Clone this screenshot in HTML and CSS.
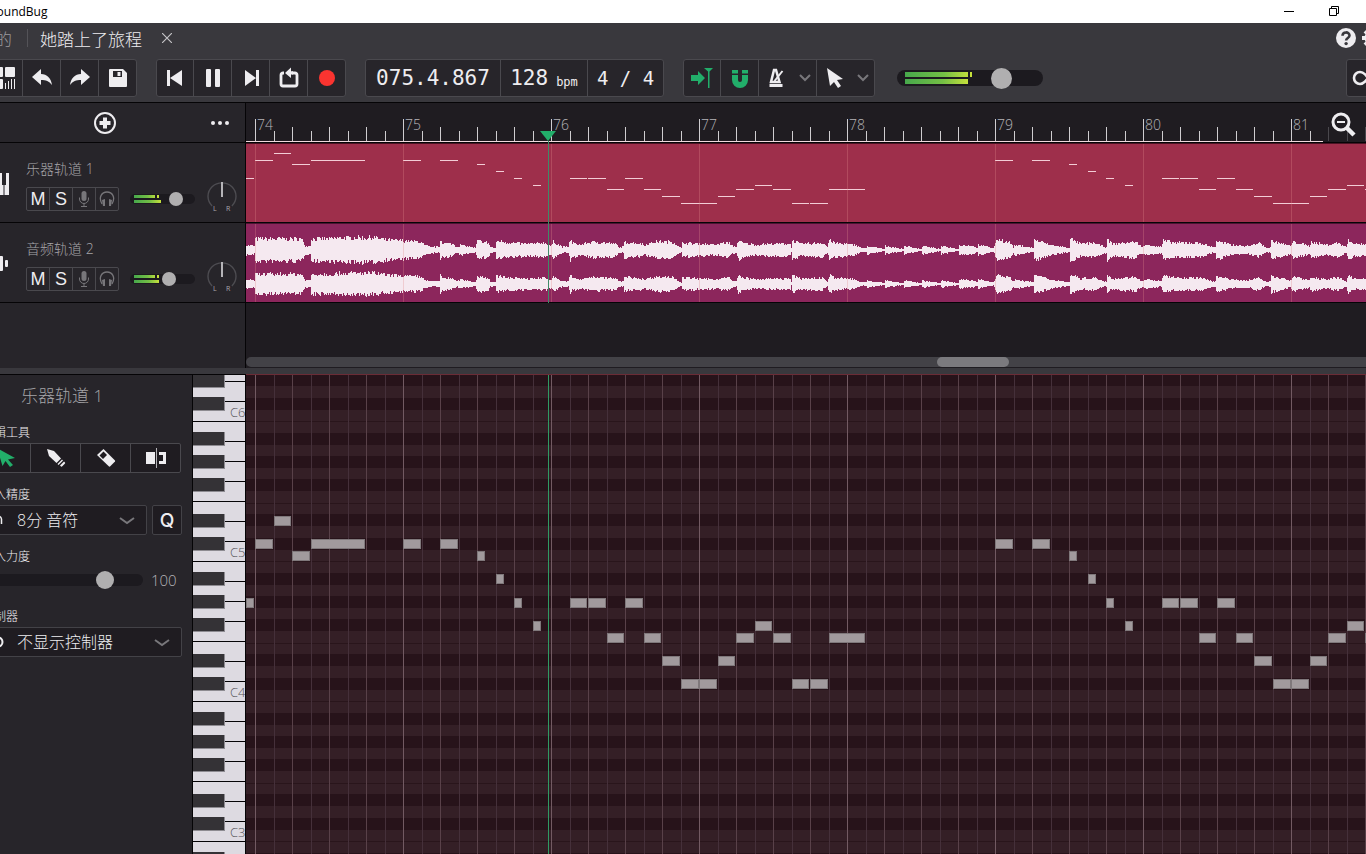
FILE: index.html
```html
<!DOCTYPE html>
<html lang="zh-CN">
<head>
<meta charset="utf-8">
<title>SoundBug</title>
<link rel="stylesheet" href="styles.css">
</head>
<body>
<div class="app">
  <header class="titlebar">
    <span class="app-name">SoundBug</span>
    <div class="window-buttons">
      <button aria-label="最小化"><svg width="10" height="10"><path d="M0 5.5h10" stroke="#000"/></svg></button>
      <button aria-label="还原"><svg width="10" height="10" fill="none" stroke="#000"><path d="M.5 2.5h7v7h-7zM2.500 2.500v-2h7v7h-2"/></svg></button>
      <button aria-label="关闭"><svg width="10" height="10"><path d="M0 0l10 10M10 0L0 10" stroke="#000"/></svg></button>
    </div>
  </header>

  <nav class="tabs">
    <a class="tab-home" href="#">我的</a>
    <span class="tab-divider"></span>
    <a class="tab-current" href="#">她踏上了旅程</a>
    <button class="tab-close" aria-label="关闭标签"><svg width="10" height="10"><path d="M0 0l10 10M10 0L0 10" stroke="#c4c3c6" stroke-width="1.200"/></svg></button>
    <div class="tab-actions">
      <button aria-label="帮助"><svg width="20" height="20"><circle cx="10" cy="10" r="10" fill="#eeedf0"/><path d="M6.500 7.800C6.500 3.300 13.500 3.400 13.500 7.500c0 2.500-3.400 2.500-3.400 5" fill="none" stroke="#39383d" stroke-width="2.600"/><circle cx="10.100" cy="15.600" r="1.700" fill="#39383d"/></svg></button>
      <button aria-label="设置"><svg width="20" height="20" fill="none" stroke="#eeedf0"><circle cx="10" cy="10" r="5.500" stroke-width="4"/><path d="M10 0v4M10 16v4M0 10h4M16 10h4M3 3l3 3M14 14l3 3M17 3l-3 3M6 14l-3 3" stroke-width="4"/></svg></button>
    </div>
  </nav>

  <div class="toolbar">
    <div class="group views">
      <button aria-label="视图"><svg width="26" height="26" fill="#eeedf0"><rect x="3" y="2" width="9" height="10" rx="1"/><rect x="14" y="2" width="10" height="10" rx="1"/><rect x="3" y="14" width="9" height="10" rx="1"/><path d="M14 18h1v6h-1zM17 16h1v8h-1zM20 14h1v10h-1zM23 14h1v10h-1z"/></svg></button>
      <button aria-label="撤销"><svg width="22" height="22"><path d="M1 10L10 2v5c6 0 10 4 11 11-3-4-6-5-11-5v5z" fill="#eeedf0"/></svg></button>
      <button aria-label="重做"><svg width="22" height="22"><path d="M21 10L12 2v5C6 7 2 11 1 18c3-4 6-5 11-5v5z" fill="#eeedf0"/></svg></button>
      <button aria-label="保存"><svg width="20" height="20"><path d="M2 1h13l4 4v13a1 1 0 0 1-1 1H2a1 1 0 0 1-1-1V2a1 1 0 0 1 1-1z" fill="#eeedf0"/><path d="M5 3h9v6H5z" fill="#27252a"/><path d="M9.500 4h3v4h-3z" fill="#eeedf0"/></svg></button>
    </div>
    <div class="group">
      <button aria-label="到开头"><svg width="20" height="20" fill="#eeedf0"><path d="M2 2h3v16H2zM17 2v16L5 10z"/></svg></button>
      <button aria-label="暂停"><svg width="20" height="20" fill="#eeedf0"><rect x="3" y="1" width="5" height="18" rx="1"/><rect x="12" y="1" width="5" height="18" rx="1"/></svg></button>
      <button aria-label="到结尾"><svg width="20" height="20" fill="#eeedf0"><path d="M15 2h3v16h-3zM4 2v16l11-8z"/></svg></button>
      <button aria-label="循环"><svg width="20" height="22"><path d="M5 6H4a2 2 0 0 0-2 2v9a2 2 0 0 0 2 2h12a2 2 0 0 0 2-2V8a2 2 0 0 0-2-2h-3" fill="none" stroke="#eeedf0" stroke-width="2.800"/><path d="M6 6l6-5.500v3.800h2v3.200h-2V11z" fill="#eeedf0"/></svg></button>
      <button aria-label="录音"><svg width="18" height="18"><circle cx="9" cy="9" r="8" fill="#fa3430"/></svg></button>
    </div>
    <div class="group readout">
      <output class="position">075.4.867</output>
      <span class="tempo">128 <small>bpm</small></span>
      <span class="meter">4 / 4</span>
    </div>
    <div class="group">
      <button aria-label="跟随播放"><svg width="24" height="24" fill="#22ae6a"><path d="M1 9h7V5l7 7-7 7v-4H1zM14 2h9l-3.500 3.500V22h-1.500V5.500z"/></svg></button>
      <button aria-label="吸附"><svg width="18" height="20"><path d="M4 7v5a5 5 0 0 0 10 0V7" fill="none" stroke="#22ae6a" stroke-width="6"/><path d="M1 2h6v3.500H1zM11 2h6v3.500h-6z" fill="#22ae6a"/></svg></button>
      <button class="wide" aria-label="节拍器"><svg width="18" height="20" fill="none" stroke="#eeedf0"><path d="M6 2h2l3.500 12H3z" stroke-width="2.500"/><path d="M1.500 17.500h13" stroke-width="3"/><path d="M6.500 13L14.500 3" stroke-width="2"/></svg><svg class="chev" width="12" height="8"><path d="M1 1l5 5 5-5"/></svg></button>
      <button class="wide" aria-label="指针"><svg width="18" height="20"><path d="M1 0l16 11-6 1 4 6-3 2-4-6-4 4z" fill="#eeedf0"/></svg><svg class="chev" width="12" height="8"><path d="M1 1l5 5 5-5"/></svg></button>
    </div>
    <div class="level master">
      <span class="bars"><i></i><i></i></span>
      <input type="range" min="0" max="100" value="75" aria-label="主音量">
    </div>
    <div class="group link">
      <button aria-label="循环链接"><svg width="34" height="20"><path d="M17 10c-3-4.500-5-6-8-6a6 6 0 0 0 0 12c3 0 5-1.500 8-6s5-6 8-6a6 6 0 0 1 0 12c-3 0-5-1.500-8-6" fill="none" stroke="#eeedf0" stroke-width="2.600"/></svg></button>
    </div>
  </div>

  <main class="arranger">
    <aside class="tracks">
      <div class="tracks-head">
        <button class="add" aria-label="添加轨道"><svg width="24" height="24"><circle cx="12" cy="12" r="10" fill="none" stroke="#eeedf0" stroke-width="2"/><path d="M12 6.500v11M6.500 12h11" stroke="#eeedf0" stroke-width="4"/></svg></button>
        <button class="more" aria-label="更多"><svg width="20" height="6" fill="#eeedf0"><circle cx="3" cy="3" r="2"/><circle cx="10" cy="3" r="2"/><circle cx="17" cy="3" r="2"/></svg></button>
      </div>
      <section class="track">
        <svg class="track-icon" width="32" height="24"><rect y="1" width="32" height="22" fill="#eeedf0"/><path d="M5 1h4v12H5zM15 1h4v12h-4zM25 1h4v12h-4zM6.500 13h1v10h-1zM16.500 13h1v10h-1zM26.500 13h1v10h-1z" fill="#27252a"/></svg>
        <div class="track-main">
          <h2>乐器轨道 1</h2>
          <div class="track-row">
            <div class="mini">
              <button>M</button><button>S</button>
              <button aria-label="录音输入"><svg width="12" height="18"><use href="#mic"/></svg></button>
              <button aria-label="监听"><svg width="16" height="18"><use href="#phones"/></svg></button>
            </div>
            <div class="level small one"><span class="bars"><i></i><i></i></span><input type="range" min="0" max="100" value="77" aria-label="轨道 1 音量"></div>
          </div>
        </div>
        <svg class="pan" width="30" height="34"><use href="#pan"/></svg>
      </section>
      <section class="track">
        <svg class="track-icon" width="32" height="24" fill="#eeedf0"><rect x="6" y="8" width="3" height="7" rx="1"/><rect x="12" y="1" width="5" height="21" rx="1"/><rect x="21" y="4" width="5" height="15" rx="1"/><rect x="28" y="8" width="3" height="7" rx="1"/></svg>
        <div class="track-main">
          <h2>音频轨道 2</h2>
          <div class="track-row">
            <div class="mini">
              <button>M</button><button>S</button>
              <button aria-label="录音输入"><svg width="12" height="18"><use href="#mic"/></svg></button>
              <button aria-label="监听"><svg width="16" height="18"><use href="#phones"/></svg></button>
            </div>
            <div class="level small two"><span class="bars"><i></i><i></i></span><input type="range" min="0" max="100" value="62" aria-label="轨道 2 音量"></div>
          </div>
        </div>
        <svg class="pan" width="30" height="34"><use href="#pan"/></svg>
      </section>
    </aside>
    <section class="timeline">
      <svg class="ruler" id="ruler"></svg>
      <svg class="lane midi" id="midi"></svg>
      <svg class="lane audio" id="audio"></svg>
      <div class="scroll"><span class="thumb"></span></div>
      <button class="zoom-out" aria-label="缩小"><svg width="26" height="26"><circle cx="11" cy="11" r="8" fill="#1f1c21" stroke="#eeedf0" stroke-width="3"/><path d="M7 11h8" stroke="#eeedf0" stroke-width="2"/><path d="M17 17l7 7" stroke="#eeedf0" stroke-width="4.500"/></svg></button>
      <svg class="playhead" width="16" height="172"><path d="M0 0h16L8 10z" fill="#22ae6a"/><path d="M8.500 10v162" stroke="#3f8a68"/></svg>
    </section>
  </main>

  <section class="editor">
    <aside class="inspector">
      <h2>乐器轨道 1</h2>
      <div class="field">
        <span class="label">编辑工具</span>
        <div class="tools">
          <button aria-label="选择"><svg width="20" height="20"><path d="M1 0l18 10-7 1.500 5 5.500-3 2-4.500-6-3 5z" fill="#22ae6a"/></svg></button>
          <button aria-label="铅笔"><svg width="20" height="20" fill="#eeedf0"><path d="M1 1l7 2 7 7.500-4.500 4.500L3 8z"/><path d="M16 11.500l1 1-4.500 4.500-1-1zM18 13.500l1 1a1 1 0 0 1 0 1l-3 3a1 1 0 0 1-1 0l-1-1z"/></svg></button>
          <button aria-label="橡皮"><svg width="20" height="20"><path d="M7.500 1L19 12.500a1 1 0 0 1 0 1L14 18.500a1 1 0 0 1-1 0L1 7z" fill="#eeedf0"/><path d="M7.500 3.500l3.500 3.500L7 11 3.500 7.500z" fill="#1f1c21"/></svg></button>
          <button aria-label="分割"><svg width="20" height="20"><path d="M0 4h9v12H0z" fill="#eeedf0"/><path d="M10.500 0v20" stroke="#b5b4b8"/><path d="M13 5.500h5.500v9H13" fill="none" stroke="#eeedf0" stroke-width="3"/></svg></button>
        </div>
      </div>
      <div class="field">
        <label class="label" for="quant">输入精度</label>
        <div class="control-row">
          <div class="select"><svg class="lead" width="22" height="20"><path d="M13 8c2-3 6-2 6.500 1v5"/></svg><select id="quant"><option>8分 音符</option></select><svg class="chev" width="16" height="8"><path d="M1 1l7 5 7-5"/></svg></div>
          <button class="q">Q</button>
        </div>
      </div>
      <div class="field">
        <label class="label" for="velocity">输入力度</label>
        <div class="slider"><input id="velocity" type="range" min="0" max="127" value="101"><output>100</output></div>
      </div>
      <div class="field">
        <label class="label" for="controller">控制器</label>
        <div class="select"><svg class="lead" width="22" height="20"><circle cx="16" cy="10" r="4.500" stroke-width="2"/></svg><select id="controller"><option>不显示控制器</option></select><svg class="chev" width="16" height="8"><path d="M1 1l7 5 7-5"/></svg></div>
      </div>
    </aside>
    <svg class="keys" id="keys"></svg>
    <svg class="roll" id="roll"></svg>
  </section>
</div>

<svg class="symbols" width="0" height="0">
  <symbol id="mic" viewBox="0 0 12 18"><rect x="3.500" y="1" width="5" height="10" rx="2.500" fill="#77767a"/><path d="M1.500 7.500v1.500a4.500 4.500 0 0 0 9 0V7.500M6 13.500V16M3 16.500h6" fill="none" stroke="#77767a"/></symbol>
  <symbol id="phones" viewBox="0 0 16 18"><path d="M3 14C-1 7 3 2 8 2s9 5 5 12" fill="none" stroke="#77767a" stroke-width="1.300"/><path d="M3 10l3-1v7H4zM13 10l-3-1v7h2z" fill="#77767a"/></symbol>
  <symbol id="pan" viewBox="0 0 30 34"><path d="M5.100 24.900a14 13.500 0 1 1 19.800 0" fill="none" stroke="#4d4c51" stroke-width="1.400"/><path d="M15 1v15" stroke="#b5b4b8" stroke-width="2"/><text x="6" y="30" class="pan-text">L</text><text x="19" y="30" class="pan-text">R</text></symbol>
</svg>
<script src="app.js"></script>
</body>
</html>
```

FILE: styles.css
```css
* { box-sizing: border-box; }
body {
  margin: 0;
  height: 100vh;
  overflow: hidden;
  background: #1f1c21;
  color: #eeedf0;
  font-family: "Open Sans", "Noto Sans CJK SC", sans-serif;
  font-size: 14px;
}
button {
  display: flex;
  align-items: center;
  justify-content: center;
  margin: 0;
  padding: 0;
  border: 0;
  background: none;
  color: inherit;
  font: inherit;
}
a { color: inherit; text-decoration: none; }
h2 { margin: 0; font-weight: 300; }
svg { display: block; flex: none; }
.symbols { position: absolute; }

/* The window is wider than the viewport on both sides. */
.app {
  display: flex;
  flex-direction: column;
  height: 100vh;
  margin: 0 -60px 0 -40px;
}

.titlebar {
  display: flex;
  align-items: center;
  justify-content: space-between;
  height: 23px;
  padding: 0 25px 0 30px;
  background: #fff;
  color: #000;
  font-size: 12px;
}
.window-buttons { display: flex; }
.window-buttons button { width: 45px; height: 20px; margin-bottom: 2px; }

.tabs {
  display: flex;
  align-items: center;
  height: 34px;
  padding: 0 44px 4px 18px;
  background: #39383d;
  font-size: 17px;
  font-weight: 300;
}
.tab-home { color: #99989c; }
.tab-divider { width: 1px; height: 18px; margin: 0 12px 0 15px; background: #545358; }
.tab-close { margin-left: 20px; }
.tab-actions { display: flex; gap: 6px; margin-left: auto; }

.toolbar {
  display: flex;
  align-items: flex-start;
  gap: 19px;
  height: 46px;
  padding: 2px 0 0 25px;
  background: #39383d;
  border-bottom: 1px solid #050406;
}
.group {
  display: flex;
  height: 38px;
  background: #27252a;
  border: 1px solid #4a494e;
  border-radius: 3px;
}
.group > * { width: 38px; border-right: 1px solid #4a494e; }
.group > :first-child { width: 37px; }
.group > :last-child { width: 37px; border-right: 0; }
.group > .wide { width: 58px; gap: 13px; padding-left: 4px; }
.group > .wide:last-child { width: 57px; }
.chev path { fill: none; stroke: #78777b; stroke-width: 2; }
.readout {
  font: 21px/37px "DejaVu Sans Mono", monospace;
  text-align: center;
}
.group > .position { width: 135px; }
.group > .tempo { display: flex; gap: 8px; justify-content: center; width: 87px; }
.tempo small { font-size: 12px; line-height: 45px; }
.group > .meter { width: 75px; font-size: 19px; }
.group.link { width: 80px; margin-left: auto; }
.group.link > button { width: 78px; padding-right: 36px; }

.level { display: grid; grid-template-columns: minmax(0, 1fr); align-items: center; }
.level > * { grid-area: 1 / 1; }
.level input, .slider input { appearance: none; background: none; margin: 0; width: 100%; min-width: 0; }
.bars { display: grid; border-radius: 9px; background: #1c1a1f; }
.bars i { background: linear-gradient(90deg, #47a84c, #74bf45 60%, #c5e03c); }
.bars i:first-child { border-right: 2px solid #c5e03c; box-shadow: inset -2px 0 #1c1a1f; }
.master { width: 146px; height: 38px; margin-left: 3px; }
.master .bars { height: 16px; padding: 2px 71px 2px 8px; gap: 2px; }
.master .bars i:last-child { margin-right: 4px; }
.level input::-webkit-slider-thumb { appearance: none; width: 21px; height: 21px; border-radius: 50%; background: #b0afb0; }
.small { width: 65px; }
.small .bars { height: 10px; gap: 2px; padding: 1px 34px 1px 4px; }
.small.one .bars i:first-child { margin-right: 2px; }
.small.two .bars { padding-right: 36px; }
.level.small input::-webkit-slider-thumb { width: 14px; height: 14px; }

.arranger { display: flex; height: 265px; flex: none; }
.tracks { width: 286px; flex: none; background: #27252a; border-right: 1px solid #050406; }
.tracks-head {
  display: flex;
  align-items: center;
  height: 40px;
  padding-left: 133px;
  border-bottom: 1px solid #050406;
}
.more { margin-left: 93px; }
.track {
  display: flex;
  height: 80px;
  padding: 16px 8px 0 17px;
  border-bottom: 1px solid #050406;
}
.track-icon { margin-top: 13px; }
.track-main { flex: 1; padding-left: 17px; }
.track h2 { font-size: 14px; line-height: 20px; color: #a5a4a8; }
.track-row { display: flex; align-items: center; gap: 11px; margin-top: 8px; }
.mini { display: flex; width: 93px; height: 24px; border: 1px solid #4a494e; border-radius: 2px; }
.mini button { flex: 1; border-right: 1px solid #4a494e; font: 18px/22px "Liberation Sans", sans-serif; }
.mini button:last-child { border-right: 0; }
.pan { margin-top: 22px; }
.pan-text { font: 7px "Open Sans", sans-serif; fill: #aaa9ad; }

.timeline { position: relative; display: flex; flex-direction: column; flex: 1; min-width: 0; }
.ruler { width: 100%; height: 40px; border-bottom: 1px solid #050406; }
.ruler text { font: 300 14px "Open Sans", sans-serif; fill: #b5b4b8; }
.lane { width: 100%; height: 80px; border-bottom: 1px solid #050406; }
.midi { background: #9e2f4b; border-top: 1px solid #4a1424; }
.audio { background: #8c265c; border-top: 1px solid #4a1430; }
.scroll { height: 10px; margin: auto 0 1px; padding-left: 691px; border-radius: 5px; background: #434247; }
.thumb { display: block; width: 72px; height: 10px; border-radius: 5px; background: #7b7a7e; }
.zoom-out { position: absolute; top: 8px; right: 70px; }
.playhead { position: absolute; left: 294px; top: 28px; }

.editor { display: flex; flex: 1; min-height: 0; border-top: 6px solid #39383d; }
.inspector {
  width: 233px;
  flex: none;
  padding: 0 10px 0 22px;
  background: #27252a;
  border-top: 1px solid #050406;
  border-right: 1px solid #050406;
}
.inspector h2 { height: 49px; padding-left: 39px; font-size: 17px; line-height: 41px; color: #a5a4a8; }
.field { margin-bottom: 13px; }
.label { display: block; margin-bottom: 2px; padding-top: 1px; font-size: 12px; line-height: 16px; font-weight: 300; }
.tools { display: flex; height: 30px; margin: 0 1px 0 -2px; background: #1f1c21; border: 1px solid #4a494e; border-radius: 2px; }
.tools button { flex: none; width: 50px; border-right: 1px solid #4a494e; }
.tools button:last-child { width: 49px; border-right: 0; }
.control-row { display: flex; gap: 5px; }
.select { position: relative; flex: 1; height: 30px; }
.select select {
  appearance: none;
  width: 100%;
  height: 30px;
  padding: 0 0 0 34px;
  background: #1f1c21;
  border: 1px solid #434247;
  border-radius: 2px;
  color: #eeedf0;
  font: 300 16px "Open Sans", "Noto Sans CJK SC", sans-serif;
}
.select .chev { position: absolute; right: 12px; top: 12px; }
.lead { position: absolute; left: 0; top: 5px; fill: none; stroke: #eeedf0; stroke-width: 1.500; }
.q { width: 30px; background: #1f1c21; border: 1px solid #434247; border-radius: 2px; font: 500 19px "Inter", sans-serif; }
.slider { display: flex; align-items: center; gap: 8px; height: 28px; padding-bottom: 2px; }
.slider input { width: 161px; height: 12px; border-radius: 6px; background: #1c1a1f; }
.slider input::-webkit-slider-thumb { appearance: none; width: 18px; height: 18px; border-radius: 50%; background: #b0afb0; }
.slider output { font-size: 15px; font-weight: 300; color: #b5b4b8; }
.keys { width: 53px; height: 100%; background: #dddae1; border-top: 1px solid #050406; border-right: 1px solid #050406; }
.keys text { font: 300 13px "Open Sans", sans-serif; fill: #55545a; }
.roll { flex: 1; min-width: 0; height: 100%; background: #341f26; border-top: 1px solid #6b2c36; }
```

FILE: app.js
```js
const NS = "http://www.w3.org/2000/svg";
const get = id => document.getElementById(id);

function add(parent, name, attrs, text) {
  const el = document.createElementNS(NS, name);
  for (const key in attrs) el.setAttribute(key, attrs[key]);
  if (text) el.textContent = text;
  parent.appendChild(el);
}
const box = (p, x, y, width, height, fill) => add(p, "rect", { x, y, width, height, fill });

const FIRST = 9;      // x of bar 74
const BAR = 148;
const EIGHTH = BAR / 8;
const OCTAVE = 140;
const ROW = OCTAVE / 12;

// Ruler
const ruler = get("ruler");
for (let i = 0; i < 64; i++) {
  const x = Math.round(FIRST + i * EIGHTH);
  const h = i % 8 === 0 ? 22 : i % 2 === 0 ? 14 : 10;
  box(ruler, x, 38 - h, 1, h, x > 1076 ? "#4a484d" : "#cfcdd0");
  if (i % 8 === 0) add(ruler, "text", { x: x + 2, y: 27 }, String(74 + i / 8));
}
box(ruler, 0, 38, 1077, 1, "#f0d8dd");

// Notes: start, length, semitones above C4 row
const intro = [[0, 8, 8], [9, 18, 13], [28, 17, 15], [46, 18, 12], [65, 54, 13]];
const phrase = [
  [157, 18, 13], [194, 18, 13], [231, 8, 12], [250, 8, 10], [268, 8, 8], [287, 8, 6],
  [324, 17, 8], [342, 18, 8], [361, 17, 5], [379, 18, 8], [398, 17, 5], [416, 18, 3],
  [435, 18, 1], [453, 18, 1], [472, 17, 3], [490, 18, 5], [509, 17, 6], [527, 18, 5],
  [546, 17, 1], [564, 18, 1], [583, 36, 5]
];
const notes = [...intro, ...phrase, ...phrase.map(([x, w, n]) => [x + 4 * BAR, w, n])];

// Piano keys and roll background; B/C boundaries are at 46, 186, 326, 466
const keys = get("keys");
const roll = get("roll");
const blackRows = [1, 3, 5, 8, 10];
const blackKeys = [11, 34, 57, 93, 116];
for (let o = -1; o < 9; o++) {
  const top = 46 + o * OCTAVE;
  for (const r of blackRows) box(roll, 0, Math.round(top + r * ROW), 2000, 12, "#27131a");
  box(roll, 0, top, 2000, 1, "#29151b");
  box(roll, 0, Math.round(top + 7 * ROW), 2000, 1, "#29151b");
  for (let k = 0; k < 7; k++) box(keys, 0, top + k * 20, 52, 1, "#050406");
  for (const k of blackKeys) {
    box(keys, 0, top + k, 32, 14, "#8d8b91");
    box(keys, 0, top + k, 31, 13, "#343236");
  }
  add(keys, "text", { x: 37, y: top - 4 }, "C" + (6 - o));
}
for (let i = 0; i < 80; i++) {
  const color = i % 8 === 0 ? "#725a62" : i % 2 === 0 ? "#594149" : "#45303a";
  box(roll, Math.round(FIRST + i * EIGHTH), 0, 1, 1400, color);
}
for (const [x, w, n] of notes) {
  const y = Math.round(327.6 - (n + 1) * ROW);
  add(roll, "rect", { x: x + 0.5, y: y + 0.5, width: w - 1, height: 9, fill: "#a19a9d", stroke: "#7f787b" });
}
box(roll, 302, 0, 1, 1400, "#2f9a63");

// Arranged MIDI clip
const midi = get("midi");
const audio = get("audio");
for (const [x, w, n] of notes) box(midi, x, Math.round(16 + (13 - n) * 3.58), w, 1, "#f3cdd6");

// Audio clip: envelope points, window x and half height
const envelope = [
  246,5, 254,4, 255,11, 300,11, 303,8, 305,4, 310,4, 311,11, 330,11, 340,12, 375,12, 385,10, 403,9,
  420,8, 424,5, 430,3, 439,3, 440,11, 442,7, 452,6, 457,3, 460,5, 466,4, 475,2, 477,9, 488,7,
  490,3, 495,2, 496,9, 510,7, 530,6, 545,7, 551,4, 553,8, 562,3, 568,3, 570,11, 572,7, 580,5,
  592,8, 605,7, 616,6, 618,3, 623,3, 624,8, 642,6, 644,4, 646,6, 655,8, 672,8, 679,3, 681,2,
  682,7, 700,6, 718,5, 720,7, 729,7, 731,4, 736,3, 738,10, 742,7, 755,5, 770,6, 790,6, 791,2,
  792,9, 800,6, 822,7, 827,3, 829,10, 834,7, 855,5, 861,2, 866,2, 867,4, 884,1, 885,4, 903,1,
  904,4, 921,1, 922,4, 940,1, 941,4, 958,1, 959,5, 972,4, 977,2, 978,5, 993,2, 995,6, 997,11,
  1010,7, 1013,3, 1015,5, 1033,2, 1034,10, 1050,5, 1069,2, 1070,11, 1080,6, 1094,7, 1104,3,
  1106,3, 1107,10, 1112,6, 1135,8, 1142,3, 1146,5, 1161,3, 1163,9, 1175,7, 1200,7, 1212,3,
  1215,3, 1216,9, 1230,5, 1248,4, 1258,7, 1267,2, 1270,3, 1271,9, 1290,4, 1293,8, 1309,4,
  1311,8, 1325,5, 1338,7, 1346,3, 1348,11, 1353,6, 1370,6, 1430,5
];
function level(x) {
  for (let i = 2; i < envelope.length; i += 2) {
    if (x <= envelope[i]) {
      const x0 = envelope[i - 2], a = envelope[i - 1];
      return a + (envelope[i + 1] - a) * (x - x0) / (envelope[i] - x0);
    }
  }
  return 4;
}
let seed = 7;
const random = () => (seed = (seed * 16807) % 2147483647) / 2147483647;
for (const [center, gain] of [[26, 1], [60, 0.88]]) {
  for (let x = 0; x < 1184; x++) {
    const a = Math.max(1, level(x + 246) * gain);
    const up = Math.round(a * (0.8 + random() * 0.42));
    const down = Math.round(a * (0.8 + random() * 0.42));
    box(audio, x, center - up, 1, up + down, "#f5e9f0");
  }
}
for (let b = 0; b < 8; b++) {
  for (const lane of [midi, audio]) {
    add(lane, "rect", { x: FIRST + b * BAR, y: 0, width: 1, height: 80, fill: "#e08a8a", "fill-opacity": 0.3 });
  }
}
```
